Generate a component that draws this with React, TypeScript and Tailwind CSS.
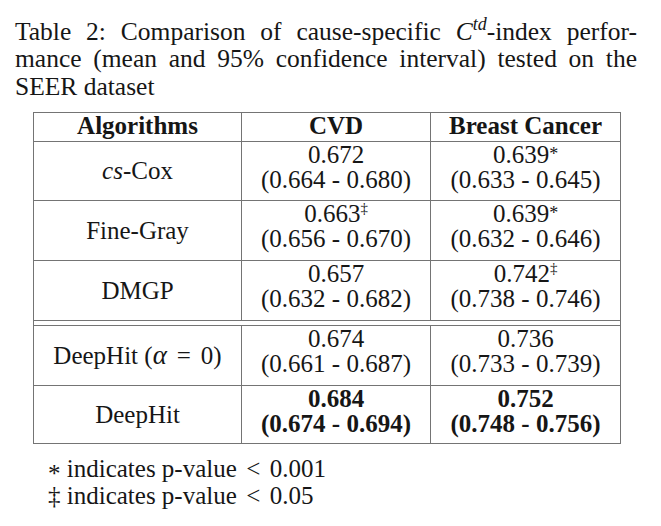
type Row = {
  name: React.ReactNode;
  cvd: [React.ReactNode, string];
  bc: [React.ReactNode, string];
  bold?: boolean;
};

const Dagger = () => (
  <span className="relative -top-[9px] text-[15px] leading-none">‡</span>
);

const Star = () => (
  <span className="relative -top-[3px] text-[18px] leading-none">*</span>
);

const ROWS: Row[] = [
  {
    name: (
      <>
        <i>cs</i>-Cox
      </>
    ),
    cvd: ['0.672', '(0.664 - 0.680)'],
    bc: [
      <>
        0.639
        <Star />
      </>,
      '(0.633 - 0.645)',
    ],
  },
  {
    name: 'Fine-Gray',
    cvd: [
      <>
        0.663
        <Dagger />
      </>,
      '(0.656 - 0.670)',
    ],
    bc: [
      <>
        0.639
        <Star />
      </>,
      '(0.632 - 0.646)',
    ],
  },
  {
    name: 'DMGP',
    cvd: ['0.657', '(0.632 - 0.682)'],
    bc: [
      <>
        0.742
        <Dagger />
      </>,
      '(0.738 - 0.746)',
    ],
  },
  {
    name: (
      <>
        DeepHit (<i className="text-[27px]">α</i>
        <span className="inline-block w-[20px] mx-[7px] text-center">=</span>0)
      </>
    ),
    cvd: ['0.674', '(0.661 - 0.687)'],
    bc: ['0.736', '(0.733 - 0.739)'],
  },
  {
    name: 'DeepHit',
    cvd: ['0.684', '(0.674 - 0.694)'],
    bc: ['0.752', '(0.748 - 0.756)'],
    bold: true,
  },
];

function ValueCell({ value, bold }: { value: [React.ReactNode, string]; bold?: boolean }) {
  return (
    <div className={bold ? 'bg-white text-center leading-[25.6px] font-bold' : 'bg-white text-center leading-[25.6px]'}>
      <div>{value[0]}</div>
      <div>{value[1]}</div>
    </div>
  );
}

function RowCells({ row }: { row: Row }) {
  return (
    <>
      <div className="bg-white flex items-center justify-center leading-[25.6px]">{row.name}</div>
      <ValueCell value={row.cvd} bold={row.bold} />
      <ValueCell value={row.bc} bold={row.bold} />
    </>
  );
}

export default function App() {
  return (
    <div className="[font-family:Liberation_Serif,serif] bg-white w-[661px] h-[526px] text-[#161616]">
      {/* Caption */}
      <div className="ml-[15px] w-[622px] pt-[18px] text-[25.5px] leading-[27.3px]">
        <div className="text-justify [text-align-last:justify]">
          Table 2: Comparison of cause-specific{' '}
          <span>
            <i>C</i>
            <i className="relative -top-[10px] text-[18px] leading-none">td</i>
            -index
          </span>{' '}
          perfor-
        </div>
        <div className="text-justify [text-align-last:justify]">
          mance (mean and 95% confidence interval) tested on the
        </div>
        <div>SEER dataset</div>
      </div>

      {/* Table */}
      <div className="ml-[33px] mt-[12px] w-[588px] grid grid-cols-[207px_188px_189px] grid-rows-[28px_58px_59px_59px_4px_59px_57px] gap-px p-px bg-[#747474] text-[25px]">
        <div className="bg-white text-center font-bold leading-[25.6px]">Algorithms</div>
        <div className="bg-white text-center font-bold leading-[25.6px]">CVD</div>
        <div className="bg-white text-center font-bold leading-[25.6px]">Breast Cancer</div>

        <RowCells row={ROWS[0]} />
        <RowCells row={ROWS[1]} />
        <RowCells row={ROWS[2]} />

        {/* double rule */}
        <div className="col-span-3 bg-white" />

        <RowCells row={ROWS[3]} />
        <RowCells row={ROWS[4]} />
      </div>

      {/* Footnotes */}
      <div className="ml-[48px] mt-[11px] text-[25px] leading-[27px]">
        <div>
          <span className="relative top-[5px]">*</span> indicates p-value
          <span className="inline-block w-[19px] mx-[7px] text-center">&lt;</span>0.001
        </div>
        <div>
          ‡ indicates p-value
          <span className="inline-block w-[19px] mx-[7px] text-center">&lt;</span>0.05
        </div>
      </div>
    </div>
  );
}
